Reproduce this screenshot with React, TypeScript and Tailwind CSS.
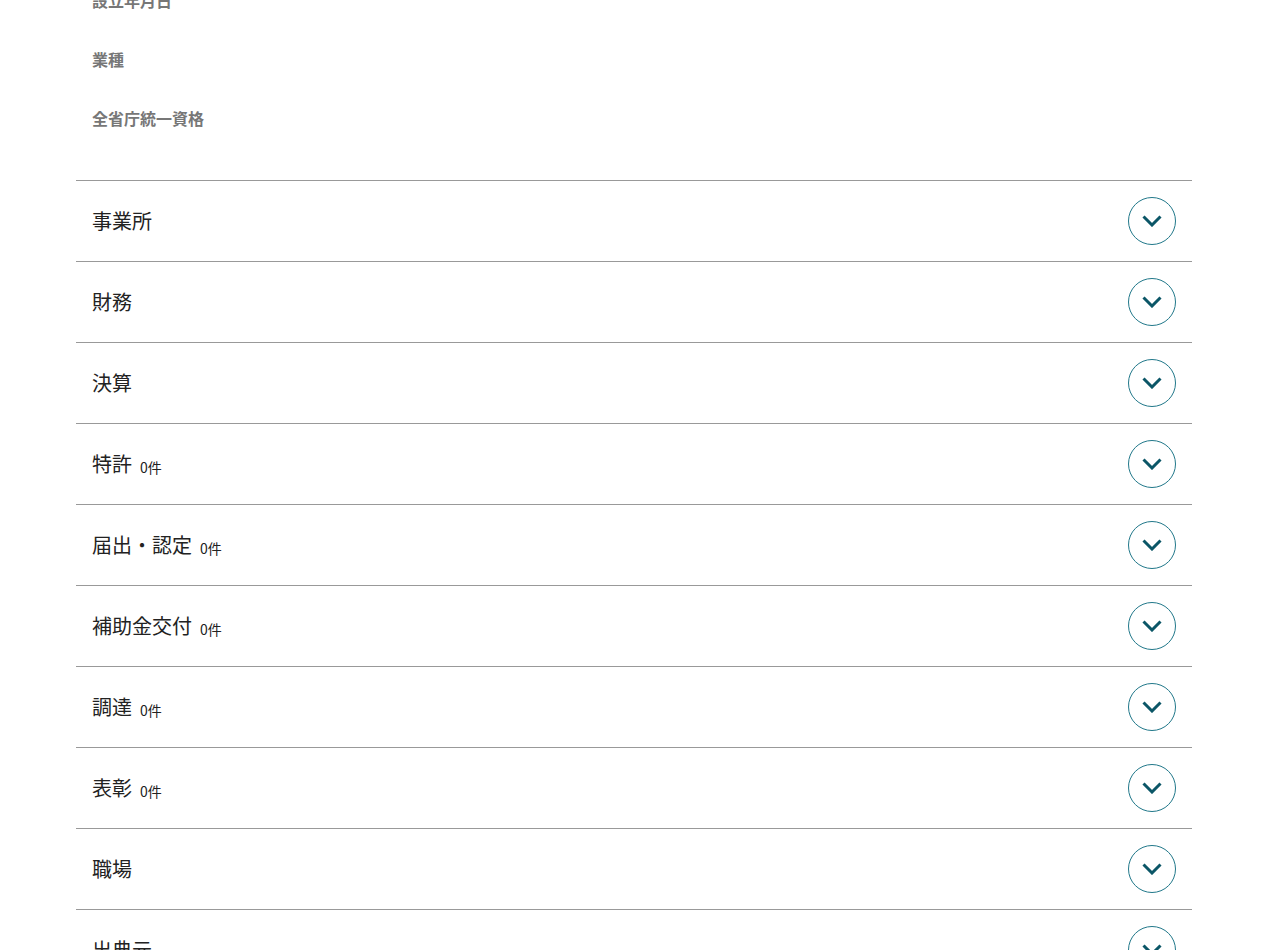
import React from 'react';

const LABELS = ['設立年月日', '業種', '全省庁統一資格'];

const SECTIONS: { title: string; count?: number }[] = [
  { title: '事業所' },
  { title: '財務' },
  { title: '決算' },
  { title: '特許', count: 0 },
  { title: '届出・認定', count: 0 },
  { title: '補助金交付', count: 0 },
  { title: '調達', count: 0 },
  { title: '表彰', count: 0 },
  { title: '職場' },
  { title: '出典元' },
];

function Chevron() {
  return (
    <span className="w-12 h-12 rounded-full border-[1.5px] border-[#21788a] flex items-center justify-center shrink-0 bg-white">
      <svg width="20" height="12" viewBox="0 0 20 12" fill="none">
        <path d="M1.5 1.5 L10 10 L18.5 1.5" stroke="#0b5667" strokeWidth="3" strokeLinejoin="miter" />
      </svg>
    </span>
  );
}

export default function App() {
  return (
    <div className="h-[950px] overflow-hidden bg-white" style={{ fontFamily: '"Noto Sans CJK JP", "Noto Sans", sans-serif' }}>
      <div className="ml-[76px] w-[1116px] -mt-[30px]">
        <div className="pb-[33px]">
          {LABELS.map(l => (
            <div key={l} className="h-[59px] flex items-center px-4">
              <p className="text-base font-bold text-[#777777]">{l}</p>
            </div>
          ))}
        </div>
        <div className="border-t border-[#999999]">
          {SECTIONS.map(s => (
            <div key={s.title} className="h-[81px] border-b border-[#999999] flex items-center justify-between px-4 cursor-pointer">
              <div className="flex items-end gap-2">
                <span className="text-[20px] leading-[28px] text-[#222222]">{s.title}</span>
                {s.count !== undefined && <span className="text-sm leading-[22px] text-[#222222]">{s.count}件</span>}
              </div>
              <Chevron />
            </div>
          ))}
        </div>
      </div>
    </div>
  );
}
